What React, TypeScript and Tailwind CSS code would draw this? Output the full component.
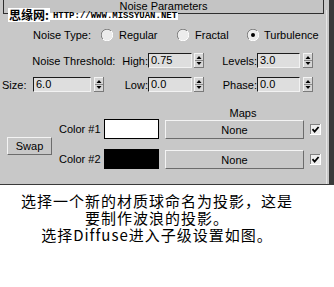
import React from "react";

const ui = { fontFamily: '"Liberation Sans", Arial, sans-serif' };
const cjk = { fontFamily: '"Noto Sans CJK SC", "Noto Sans", sans-serif' };

function Spinner() {
  return (
    <svg width="10" height="15" viewBox="0 0 10 15" className="shrink-0 block">
      <rect x="0" y="0" width="10" height="15" fill="#d6d6d6" />
      <line x1="0.5" y1="0" x2="0.5" y2="15" stroke="#f4f4f4" />
      <line x1="0" y1="0.5" x2="10" y2="0.5" stroke="#f4f4f4" />
      <line x1="9.5" y1="0" x2="9.5" y2="15" stroke="#7a7a7a" />
      <line x1="0" y1="14.5" x2="10" y2="14.5" stroke="#7a7a7a" />
      <line x1="1" y1="7.5" x2="9" y2="7.5" stroke="#8a8a8a" />
      <polygon points="2.5,6 7.5,6 5,3" fill="#000" />
      <polygon points="2.5,9 7.5,9 5,12" fill="#000" />
    </svg>
  );
}

function Field({ value, w }: { value: string; w: string }) {
  return (
    <div
      className={`${w} h-[15px] bg-[#dedede] border-t border-l border-t-[#1c1c1c] border-l-[#1c1c1c] border-b border-r border-b-[#f2f2f2] border-r-[#f2f2f2] pl-[2px] text-[11px] leading-[13px] text-black shrink-0`}
      style={ui}
    >
      {value}
    </div>
  );
}

function Radio({ checked }: { checked?: boolean }) {
  return (
    <svg width="12" height="12" viewBox="0 0 12 12" className="shrink-0 block">
      <circle cx="6" cy="6" r="5.5" fill="#ececec" />
      <path d="M1.9 10.1 A5.5 5.5 0 0 1 10.1 1.9" fill="none" stroke="#808080" strokeWidth="1" />
      <path d="M10.1 1.9 A5.5 5.5 0 0 1 1.9 10.1" fill="none" stroke="#ffffff" strokeWidth="1" />
      {checked && <circle cx="6" cy="6" r="2" fill="#000" />}
    </svg>
  );
}

function Check() {
  return (
    <svg width="11" height="11" viewBox="0 0 11 11" className="shrink-0 block">
      <rect x="0" y="0" width="11" height="11" fill="#eeeeee" />
      <line x1="0.5" y1="0" x2="0.5" y2="11" stroke="#808080" />
      <line x1="0" y1="0.5" x2="11" y2="0.5" stroke="#808080" />
      <line x1="10.5" y1="0" x2="10.5" y2="11" stroke="#ffffff" />
      <line x1="0" y1="10.5" x2="11" y2="10.5" stroke="#ffffff" />
      <path d="M2.5 5.2 L4.6 7.6 L8.6 3" fill="none" stroke="#000" strokeWidth="1.8" />
    </svg>
  );
}

function Btn({ children, cls }: { children: React.ReactNode; cls: string }) {
  return (
    <div
      className={`${cls} flex items-center justify-center bg-[#c8c8c8] border border-t-[#f4f4f4] border-l-[#f4f4f4] border-b-[#6c6c6c] border-r-[#6c6c6c] text-[11px] text-black shrink-0`}
      style={ui}
    >
      {children}
    </div>
  );
}

export default function App() {
  return (
    <div className="w-[334px] h-[287px] bg-white overflow-hidden relative">
      {/* panel */}
      <div className="flex h-[185px] border-b border-b-[#3a3a3a] bg-[#c8c8c8]">
        <div className="w-[326px] flex flex-col text-[11px] text-black leading-[14px]" style={ui}>
          {/* header */}
          <div className="ml-[3px] w-[321px] h-[14px] border-l border-r border-b border-[#2e2e2e] bg-[#c4c4c4] flex items-start justify-center pt-[1px] text-[11px] leading-[11px]">
            Noise Parameters
          </div>

          {/* Noise type */}
          <div className="mt-[14px] h-[14px] flex items-center">
            <div className="w-[91px] text-right">Noise Type:</div>
            <div className="ml-[10px] w-[76px] flex items-center">
              <Radio />
              <span className="ml-[6px]">Regular</span>
            </div>
            <div className="w-[70px] flex items-center">
              <Radio />
              <span className="ml-[6px]">Fractal</span>
            </div>
            <div className="flex items-center">
              <Radio checked />
              <span className="ml-[5px]">Turbulence</span>
            </div>
          </div>

          {/* threshold row */}
          <div className="mt-[11px] h-[15px] flex items-center">
            <div className="w-[148px] flex justify-end">
              <span>Noise Threshold:</span>
              <span className="ml-[7px]">High:</span>
            </div>
            <Field value="0.75" w="w-[44px]" />
            <div className="ml-[2px]">
              <Spinner />
            </div>
            <div className="w-[53px] text-right">Levels:</div>
            <Field value="3.0" w="w-[43px]" />
            <div className="ml-[3px]">
              <Spinner />
            </div>
          </div>

          {/* size row */}
          <div className="mt-[9px] h-[15px] flex items-center">
            <div className="w-[33px] pl-[2px]">Size:</div>
            <Field value="6.0" w="w-[58px]" />
            <div className="ml-[3px]">
              <Spinner />
            </div>
            <div className="w-[44px] text-right">Low:</div>
            <Field value="0.0" w="w-[44px]" />
            <div className="ml-[2px]">
              <Spinner />
            </div>
            <div className="w-[53px] text-right">Phase:</div>
            <Field value="0.0" w="w-[43px]" />
            <div className="ml-[3px]">
              <Spinner />
            </div>
          </div>

          {/* maps section */}
          <div className="mt-[15px] flex items-start">
            <Btn cls="ml-[7px] mt-[30px] w-[45px] h-[18px]">Swap</Btn>
            <div className="ml-[7px] flex flex-col">
              <div className="ml-[106px] w-[156px] h-[12px] text-center leading-[12px]">Maps</div>
              <div className="h-[20px] flex items-center">
                <div className="w-[45px]">Color #1</div>
                <div className="w-[55px] h-[20px] bg-white border border-black shrink-0" />
                <Btn cls="ml-[6px] w-[139px] h-[19px] mt-[1px]">None</Btn>
                <div className="ml-[6px]">
                  <Check />
                </div>
              </div>
              <div className="mt-[10px] h-[20px] flex items-center">
                <div className="w-[45px]">Color #2</div>
                <div className="w-[55px] h-[20px] bg-black border border-black shrink-0" />
                <Btn cls="ml-[6px] w-[139px] h-[19px] mt-[1px]">None</Btn>
                <div className="ml-[6px]">
                  <Check />
                </div>
              </div>
            </div>
          </div>
        </div>
        <div className="w-[1px] mt-[10px] bg-[#e6e6e6]" />
        <div className="w-[2px]" />
        <div className="w-[5px] bg-[#3a3a3a]" />
      </div>

      {/* watermark */}
      <div className="absolute left-[8px] top-[8px] flex items-start">
        <span className="bg-white text-[12px] leading-[14px] font-bold text-black px-[1px]" style={cjk}>
          思缘网:
        </span>
        <span
          className="mt-[5px] bg-white text-[9px] leading-[7px] font-bold text-black pl-[3px] pr-[1px]"
          style={{ fontFamily: '"Liberation Mono", monospace' }}
        >
          HTTP://WWW.MISSYUAN.NET
        </span>
      </div>

      {/* caption */}
      <div className="mt-[7px] w-[314px] text-center text-[15px] leading-[17px] tracking-[1px] text-black" style={cjk}>
        <div>选择一个新的材质球命名为投影，这是</div>
        <div>要制作波浪的投影。</div>
        <div>选择Diffuse进入子级设置如图。</div>
      </div>
    </div>
  );
}
